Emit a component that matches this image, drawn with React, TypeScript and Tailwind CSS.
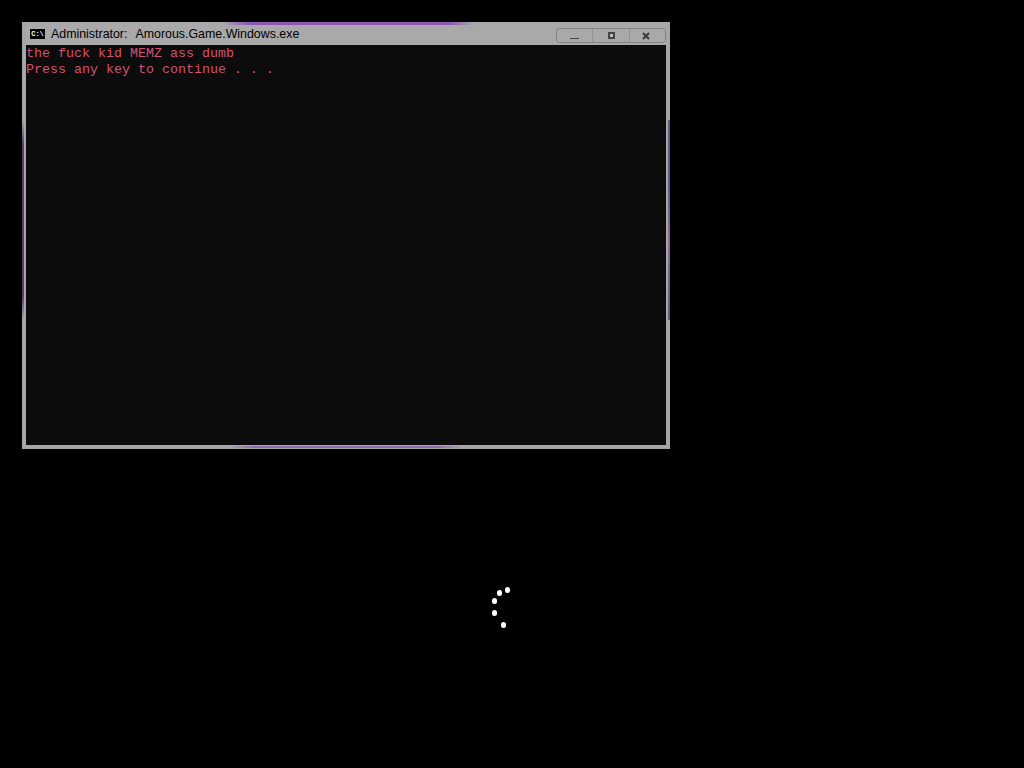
const dots = [
  { x: 507, y: 590 },
  { x: 499, y: 593 },
  { x: 494, y: 601 },
  { x: 494, y: 613 },
  { x: 503, y: 625 },
];

function TitleButtons() {
  return (
    <div className="flex h-[15px] w-[110px] self-start mt-[6px] rounded-[3px] border border-[#858585] bg-[#a9a9a9]">
      <div className="flex w-[36px] items-end justify-center border-r border-[#949494] pb-[3px]">
        <div className="h-[1px] w-[9px] bg-[#444]" />
      </div>
      <div className="flex w-[37px] items-center justify-center border-r border-[#949494]">
        <div className="h-[7px] w-[7px] border-2 border-[#444] bg-[#bbb]" />
      </div>
      <div className="flex flex-1 items-center justify-center pr-[4px]">
        <svg width="8" height="8" viewBox="0 0 8 8">
          <path d="M1 1L7 7M7 1L1 7" stroke="#3a3a3a" strokeWidth="2" />
        </svg>
      </div>
    </div>
  );
}

export default function App() {
  return (
    <div className="relative h-[768px] w-[1024px] overflow-hidden bg-black p-[22px]">
      {/* Console window */}
      <div className="relative flex h-[427px] w-[648px] flex-col bg-[#a6a6a6] px-[4px] pb-[4px]">
        <div className="flex h-[23px] shrink-0 items-start justify-between bg-[#a9a9a9]">
          <div className="flex items-center pl-[4px] pt-[4px] font-['Liberation_Sans',sans-serif] text-[12.4px] leading-[16px] text-black">
            <div className="flex h-[10px] w-[15px] items-center justify-center bg-black">
              <span className="font-['Liberation_Mono',monospace] text-[7px] font-bold leading-none text-white">C:\</span>
            </div>
            <span className="ml-[6px]">Administrator:</span>
            <span className="ml-[8px]">Amorous.Game.Windows.exe</span>
          </div>
          <TitleButtons />
        </div>
        <div className="flex-1 bg-[#0c0c0c] pt-[1px] font-['Liberation_Mono',monospace] text-[13.33px] leading-[16px] text-[#d6506f]">
          <div>the fuck kid MEMZ ass dumb</div>
          <div>Press any key to continue . . .</div>
        </div>

        {/* purple glow on the window edges */}
        <div className="absolute left-[202px] top-0 h-[3px] w-[250px] bg-[linear-gradient(to_right,#a6a6a6,#8f55b5_10%,#8f55b5_90%,#a6a6a6)]" />
        <div className="absolute bottom-[1px] left-[206px] h-[2px] w-[236px] bg-[linear-gradient(to_right,#a6a6a6,#8d6aa8_12%,#8d6aa8_88%,#a6a6a6)]" />
        <div className="absolute left-0 top-[98px] h-[200px] w-[2px] bg-[linear-gradient(to_bottom,#a6a6a6,#5c3a6d_12%,#5c3a6d_88%,#a6a6a6)]" />
        <div className="absolute right-0 top-[98px] h-[200px] w-[2px] bg-[linear-gradient(to_bottom,#5a5a80,#5a5590_30%,#8a6aa0_60%,#5a5a80)]" />
      </div>

      {/* Loading spinner */}
      {dots.map((d) => (
        <div
          key={d.x + '-' + d.y}
          className="absolute h-[6px] w-[5px] rounded-full bg-white"
          style={{ left: d.x - 2.5, top: d.y - 3 }}
        />
      ))}
    </div>
  );
}
